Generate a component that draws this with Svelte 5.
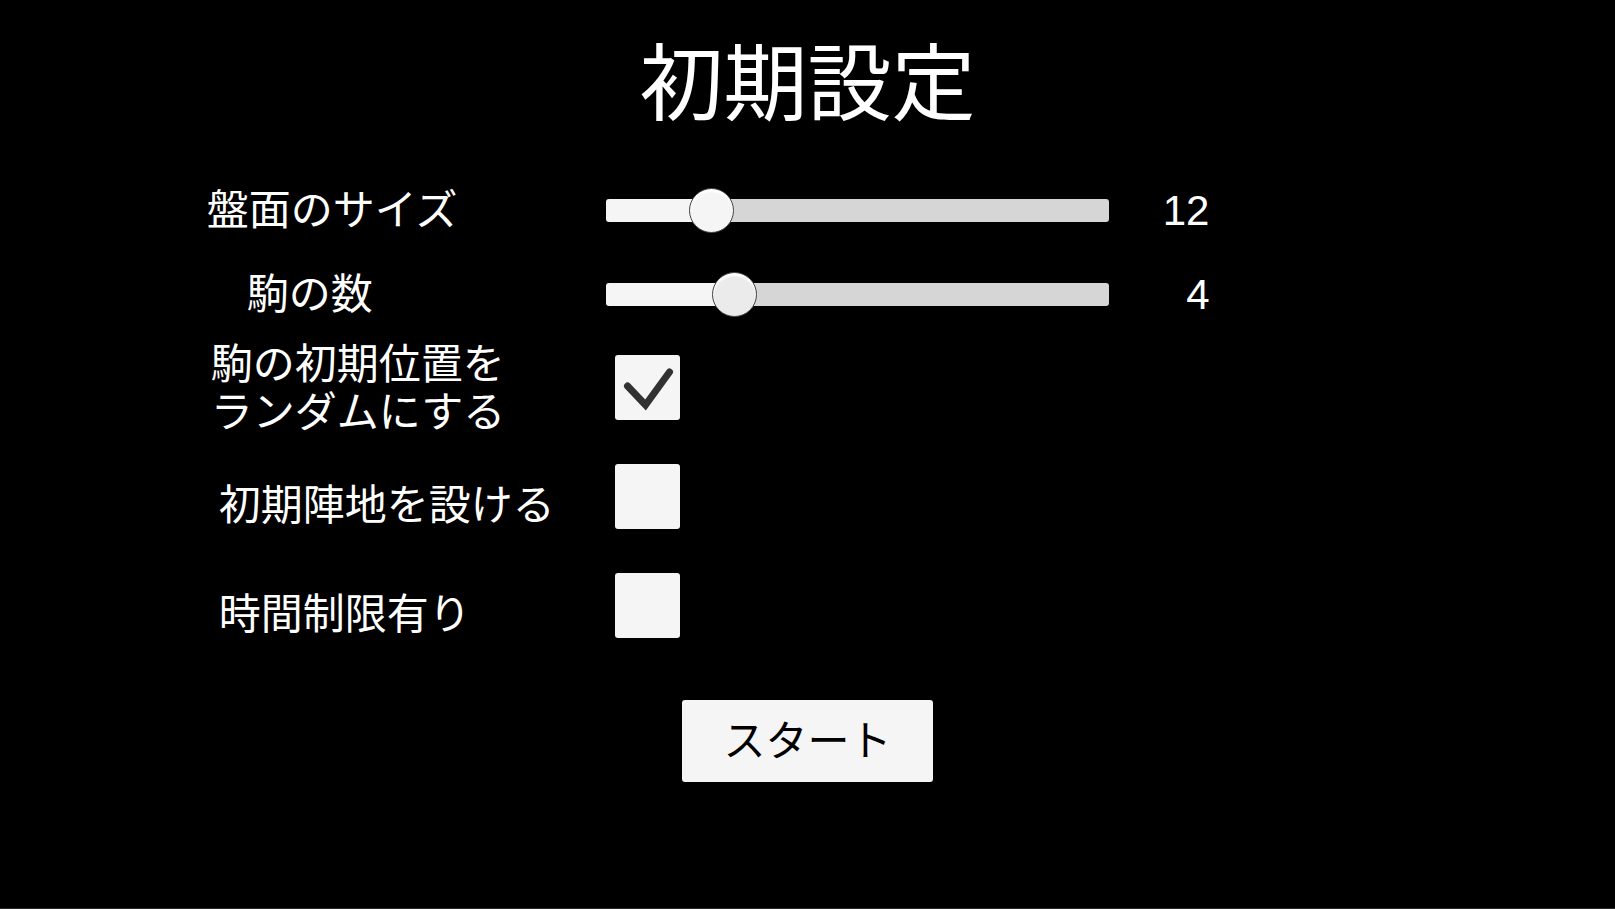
<script>
  let boardSize = $state(12);
  let pieceCount = $state(4);
  let randomStart = $state(true);
  let homeArea = $state(false);
  let timeLimit = $state(false);

  const BOARD = { min: 8, max: 30 };
  const PIECES = { min: 1, max: 14 };

  const percent = (value, { min, max }) => ((value - min) / (max - min)) * 100;
</script>

{#snippet tick()}
  <svg viewBox="0 0 65 65" aria-hidden="true"><path d="M12.500 31L30.500 50L54.500 17" /></svg>
{/snippet}

<main>
  <h1>初期設定</h1>

  <form onsubmit={(e) => e.preventDefault()}>
    <div class="sliders">
      <div class="row">
        <label for="board">盤面のサイズ</label>
        <input id="board" type="range" min={BOARD.min} max={BOARD.max} bind:value={boardSize} style="--fill: {percent(boardSize, BOARD)}%" />
        <output for="board">{boardSize}</output>
      </div>
      <div class="row">
        <label for="pieces" class="deep">駒の数</label>
        <input id="pieces" class="active" type="range" min={PIECES.min} max={PIECES.max} bind:value={pieceCount} style="--fill: {percent(pieceCount, PIECES)}%" />
        <output for="pieces">{pieceCount}</output>
      </div>
    </div>

    <div class="toggles">
      <div class="row">
        <label for="random" class="double">駒の初期位置を<br />ランダムにする</label>
        <span class="box">
          <input id="random" type="checkbox" bind:checked={randomStart} />
          {@render tick()}
        </span>
      </div>
      <div class="row">
        <label for="home" class="single">初期陣地を設ける</label>
        <span class="box">
          <input id="home" type="checkbox" bind:checked={homeArea} />
          {@render tick()}
        </span>
      </div>
      <div class="row">
        <label for="time" class="single">時間制限有り</label>
        <span class="box">
          <input id="time" type="checkbox" bind:checked={timeLimit} />
          {@render tick()}
        </span>
      </div>
    </div>

    <button type="submit">スタート</button>
  </form>
</main>

<style>
  :global(body) {
    background: #000;
  }

  main {
    box-sizing: border-box;
    min-height: 100vh;
    border-bottom: 1px solid #2c2a2c;
    background: #000;
    color: #fff;
    font-family: "Liberation Sans", "Noto Sans CJK JP", sans-serif;
    font-size: 42px;
    line-height: 48px;
  }

  h1 {
    margin: 0;
    padding: 35px 0 37px;
    font-size: 84px;
    font-weight: 400;
    line-height: 100px;
    text-align: center;
  }

  form {
    display: flex;
    flex-direction: column;
  }

  .sliders {
    display: grid;
    grid-auto-rows: 76px;
    gap: 8px;
  }

  .toggles {
    display: grid;
    grid-auto-rows: 109px;
    margin-top: 1px;
  }

  .row {
    display: grid;
    grid-template-columns: 12.8% 24.7% 31.2% 100px;
    align-items: center;
  }

  label {
    grid-column: 2;
    padding-top: 2px;
    white-space: nowrap;
  }

  .deep {
    padding-left: 40px;
  }

  .double {
    padding-left: 4px;
  }

  .single {
    padding: 18px 0 0 12px;
  }

  output {
    padding-top: 2px;
    text-align: right;
  }

  input[type="range"] {
    appearance: none;
    width: 100%;
    height: 44px;
    margin: 0;
    background: transparent;
    --thumb: #f5f5f5;
  }

  input[type="range"].active {
    --thumb: #ebebeb;
  }

  input[type="range"]::-webkit-slider-runnable-track {
    height: 23px;
    border-radius: 3px;
    background: linear-gradient(to right, #f5f5f5 var(--fill), #d6d6d6 calc(var(--fill) + 1%));
  }

  input[type="range"]::-webkit-slider-thumb {
    appearance: none;
    box-sizing: border-box;
    width: 45px;
    height: 45px;
    margin-top: -11px;
    border: 1px solid #444;
    border-radius: 50%;
    background: var(--thumb);
    box-shadow: inset 0 3px 2px #fff;
  }

  .box {
    display: grid;
    width: 65px;
    height: 65px;
    margin-left: 9px;
  }

  .box input,
  .box svg {
    grid-area: 1 / 1;
    width: 100%;
    height: 100%;
    margin: 0;
  }

  .box input {
    appearance: none;
    border-radius: 3px;
    background: #f5f5f5;
  }

  .box svg {
    visibility: hidden;
    pointer-events: none;
    fill: none;
    stroke: #323232;
    stroke-width: 7;
    stroke-linecap: round;
  }

  .box input:checked + svg {
    visibility: visible;
  }

  button {
    align-self: center;
    height: 82px;
    margin: 40px 0 0;
    padding: 2px 41px 0;
    border: 0;
    border-radius: 3px;
    background: #f5f5f5;
    color: #000;
    font: inherit;
  }
</style>
